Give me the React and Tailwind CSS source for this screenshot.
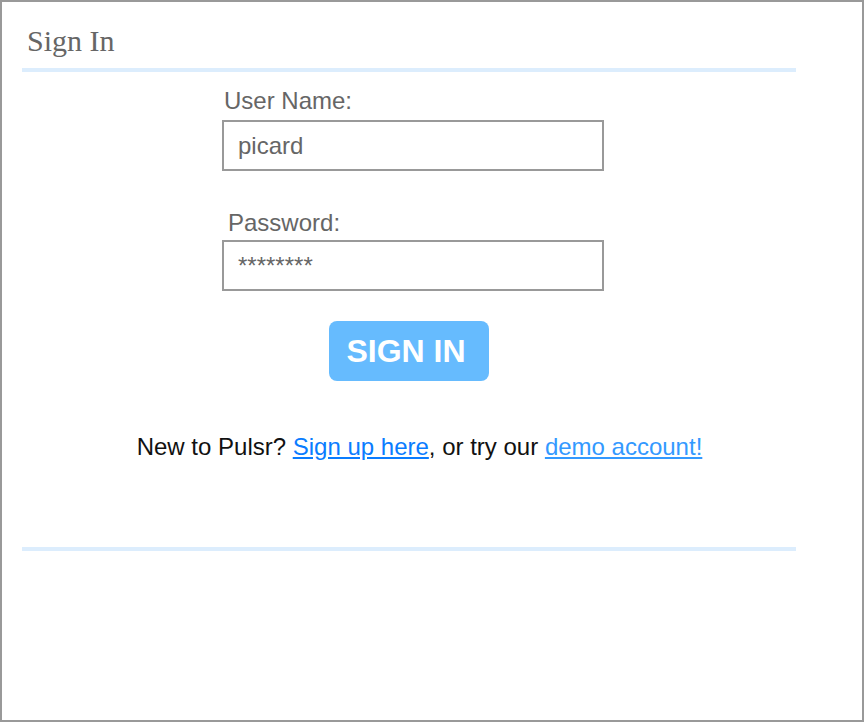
export default function App() {
  return (
    <div className="w-[864px] h-[722px] border-2 border-[#999] bg-white font-['Liberation_Sans',Arial,sans-serif]">
      <div className="ml-[20px] w-[774px]">
        <div className="pt-[21px] pb-[9px] pl-[5px] border-b-4 border-[#dcedfd]">
          <h1 className="text-[30px] leading-[36px] text-[#666] font-['Liberation_Serif','Times_New_Roman',serif]">
            Sign In
          </h1>
        </div>

        <div className="ml-[200px] w-[382px]">
          <label className="block mt-[15px] pl-[2px] text-[24px] leading-[28px] text-[#666]">User Name:</label>
          <input
            type="text"
            defaultValue="picard"
            className="block mt-[5px] w-[382px] h-[51px] border-2 border-[#999] px-[14px] text-[24px] text-[#666] outline-none"
          />

          <label className="block mt-[38px] pl-[6px] text-[24px] leading-[28px] text-[#666]">Password:</label>
          <input
            type="text"
            defaultValue="********"
            className="block mt-[3px] w-[382px] h-[51px] border-2 border-[#999] px-[14px] text-[24px] text-[#666] outline-none"
          />
        </div>

        <button className="block mx-auto mt-[30px] w-[160px] h-[60px] pr-[6px] rounded-[8px] bg-[#66bbfe] text-white text-[32px] font-bold leading-none">
          SIGN IN
        </button>

        <p className="mt-[52px] pl-[21px] text-center text-[24px] leading-[28px] text-[#111]">
          New to Pulsr?{" "}
          <a href="#" className="underline text-[#0a7cff]">Sign up here</a>, or try our{" "}
          <a href="#" className="underline text-[#3399ff]">demo account!</a>
        </p>

        <div className="mt-[86px] border-b-4 border-[#dcedfd]" />
      </div>
    </div>
  );
}
